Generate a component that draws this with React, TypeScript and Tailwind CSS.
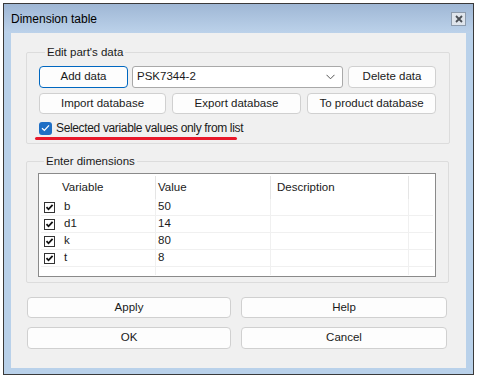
import React from 'react';

const rows = [
  { name: 'b', value: '50' },
  { name: 'd1', value: '14' },
  { name: 'k', value: '80' },
  { name: 't', value: '8' },
];

function Btn({ label, className = '', focused = false }: { label: string; className?: string; focused?: boolean }) {
  return (
    <div
      className={`flex items-center justify-center rounded-[4px] border bg-[#fdfdfd] text-[#1a1a1a] ${
        focused ? 'border-[#0067c0]' : 'border-[#d0d0d0]'
      } ${className}`}
    >
      {label}
    </div>
  );
}

function RowCheck() {
  return (
    <div className="flex h-[11px] w-[11px] items-center justify-center border border-[#333] bg-white">
      <svg width="9" height="9" viewBox="0 0 9 9">
        <path d="M1.5 4.2 L3.5 6.3 L7.6 1.8" stroke="#111" strokeWidth="1.8" fill="none" />
      </svg>
    </div>
  );
}

export default function App() {
  return (
    <div className="h-[379px] w-[477px] bg-white pl-[3px] pt-[3px] font-['Liberation_Sans',sans-serif] text-[11.5px] text-[#1a1a1a]">
      <div className="flex h-[372px] w-[471px] flex-col border border-[#3a3a3a] bg-[#b9d1ea]">
        {/* title bar */}
        <div className="flex h-[29px] shrink-0 items-center justify-between bg-gradient-to-b from-[#9fb7d5] to-[#bcd2ea] pl-[7px] pr-[7px]">
          <span className="text-[12px] text-black">Dimension table</span>
          <div className="flex h-[14px] w-[15px] items-center justify-center border border-[#8d9bac] bg-[#dfe5ec]">
            <svg width="8" height="8" viewBox="0 0 8 8">
              <path d="M1 1 L7 7 M7 1 L1 7" stroke="#4a4f55" strokeWidth="1.8" />
            </svg>
          </div>
        </div>

        {/* client */}
        <div className="mx-[7px] mb-[6px] flex flex-1 flex-col bg-[#f0f0f0] pl-[15px] pr-[17px] pt-[12px]">
          <fieldset className="rounded-[2px] border border-[#dcdcdc] pb-[3px] pl-[12px] pr-[13px]">
            <legend className="ml-[6px] px-[2px] leading-[15px]">Edit part's data</legend>
            <div className="mt-[6px] flex gap-[4px]">
              <Btn label="Add data" focused className="h-[22px] w-[89px]" />
              <div className="flex h-[22px] w-[211px] items-center justify-between rounded-[3px] border border-[#a9a9a9] bg-white pl-[4px] pr-[7px]">
                <span>PSK7344-2</span>
                <svg width="9" height="6" viewBox="0 0 9 6">
                  <path d="M0.5 0.8 L4.5 4.8 L8.5 0.8" stroke="#555" strokeWidth="1" fill="none" />
                </svg>
              </div>
              <Btn label="Delete data" className="ml-[1px] h-[22px] w-[88px]" />
            </div>
            <div className="mt-[5px] flex gap-[6px]">
              <Btn label="Import database" className="h-[21px] w-[127px]" />
              <Btn label="Export database" className="h-[21px] w-[129px]" />
              <Btn label="To product database" className="h-[21px] w-[129px]" />
            </div>
            <div className="mt-[7px] flex h-[14px] items-center gap-[4px]">
              <div className="flex h-[13px] w-[13px] items-center justify-center rounded-[3px] bg-[#1f6fc5]">
                <svg width="9" height="8" viewBox="0 0 9 8">
                  <path d="M1 4.2 L3.4 6.4 L8 1.4" stroke="white" strokeWidth="1.3" fill="none" />
                </svg>
              </div>
              <span className="text-[12px] tracking-[-0.35px]">Selected variable values only from list</span>
            </div>
            <div className="-ml-[4px] mt-[2px] h-[3px] w-[202px] rounded-full bg-[#e8182a]" />
          </fieldset>

          <fieldset className="mt-[10px] rounded-[2px] border border-[#dcdcdc] pb-[5px] pl-[11px] pr-[11px]">
            <legend className="ml-[6px] px-[2px] leading-[15px]">Enter dimensions</legend>
            <div className="mt-[4px] h-[104px] w-[398px] border border-[#8a8a8a] bg-white p-[2px]">
              <div className="flex h-[23px]">
                <div className="flex w-[115px] items-center border-r border-[#e5e5e5] pl-[21px]">Variable</div>
                <div className="flex w-[115px] items-center border-r border-[#e5e5e5] pl-[2px]">Value</div>
                <div className="flex w-[138px] items-center border-r border-[#e5e5e5] pl-[6px]">Description</div>
                <div className="flex-1" />
              </div>
              {rows.map((r) => (
                <div key={r.name} className="flex h-[17px] border-b border-[#f0f0f0]">
                  <div className="flex w-[115px] items-center gap-[9px] border-r border-[#f0f0f0] pl-[3px]">
                    <RowCheck />
                    <span>{r.name}</span>
                  </div>
                  <div className="flex w-[115px] items-center border-r border-[#f0f0f0] pl-[2px]">{r.value}</div>
                  <div className="w-[138px] border-r border-[#f0f0f0]" />
                  <div className="flex-1" />
                </div>
              ))}
              <div className="flex h-[8px]">
                <div className="w-[115px] border-r border-[#f0f0f0]" />
                <div className="w-[115px] border-r border-[#f0f0f0]" />
                <div className="w-[138px] border-r border-[#f0f0f0]" />
              </div>
            </div>
          </fieldset>

          <div className="mt-[14px] grid grid-cols-[204px_206px] gap-x-[10px] gap-y-[9px] pl-[1px]">
            <Btn label="Apply" className="h-[21px]" />
            <Btn label="Help" className="h-[21px]" />
            <Btn label="OK" className="h-[22px]" />
            <Btn label="Cancel" className="h-[22px]" />
          </div>
        </div>
      </div>
    </div>
  );
}
